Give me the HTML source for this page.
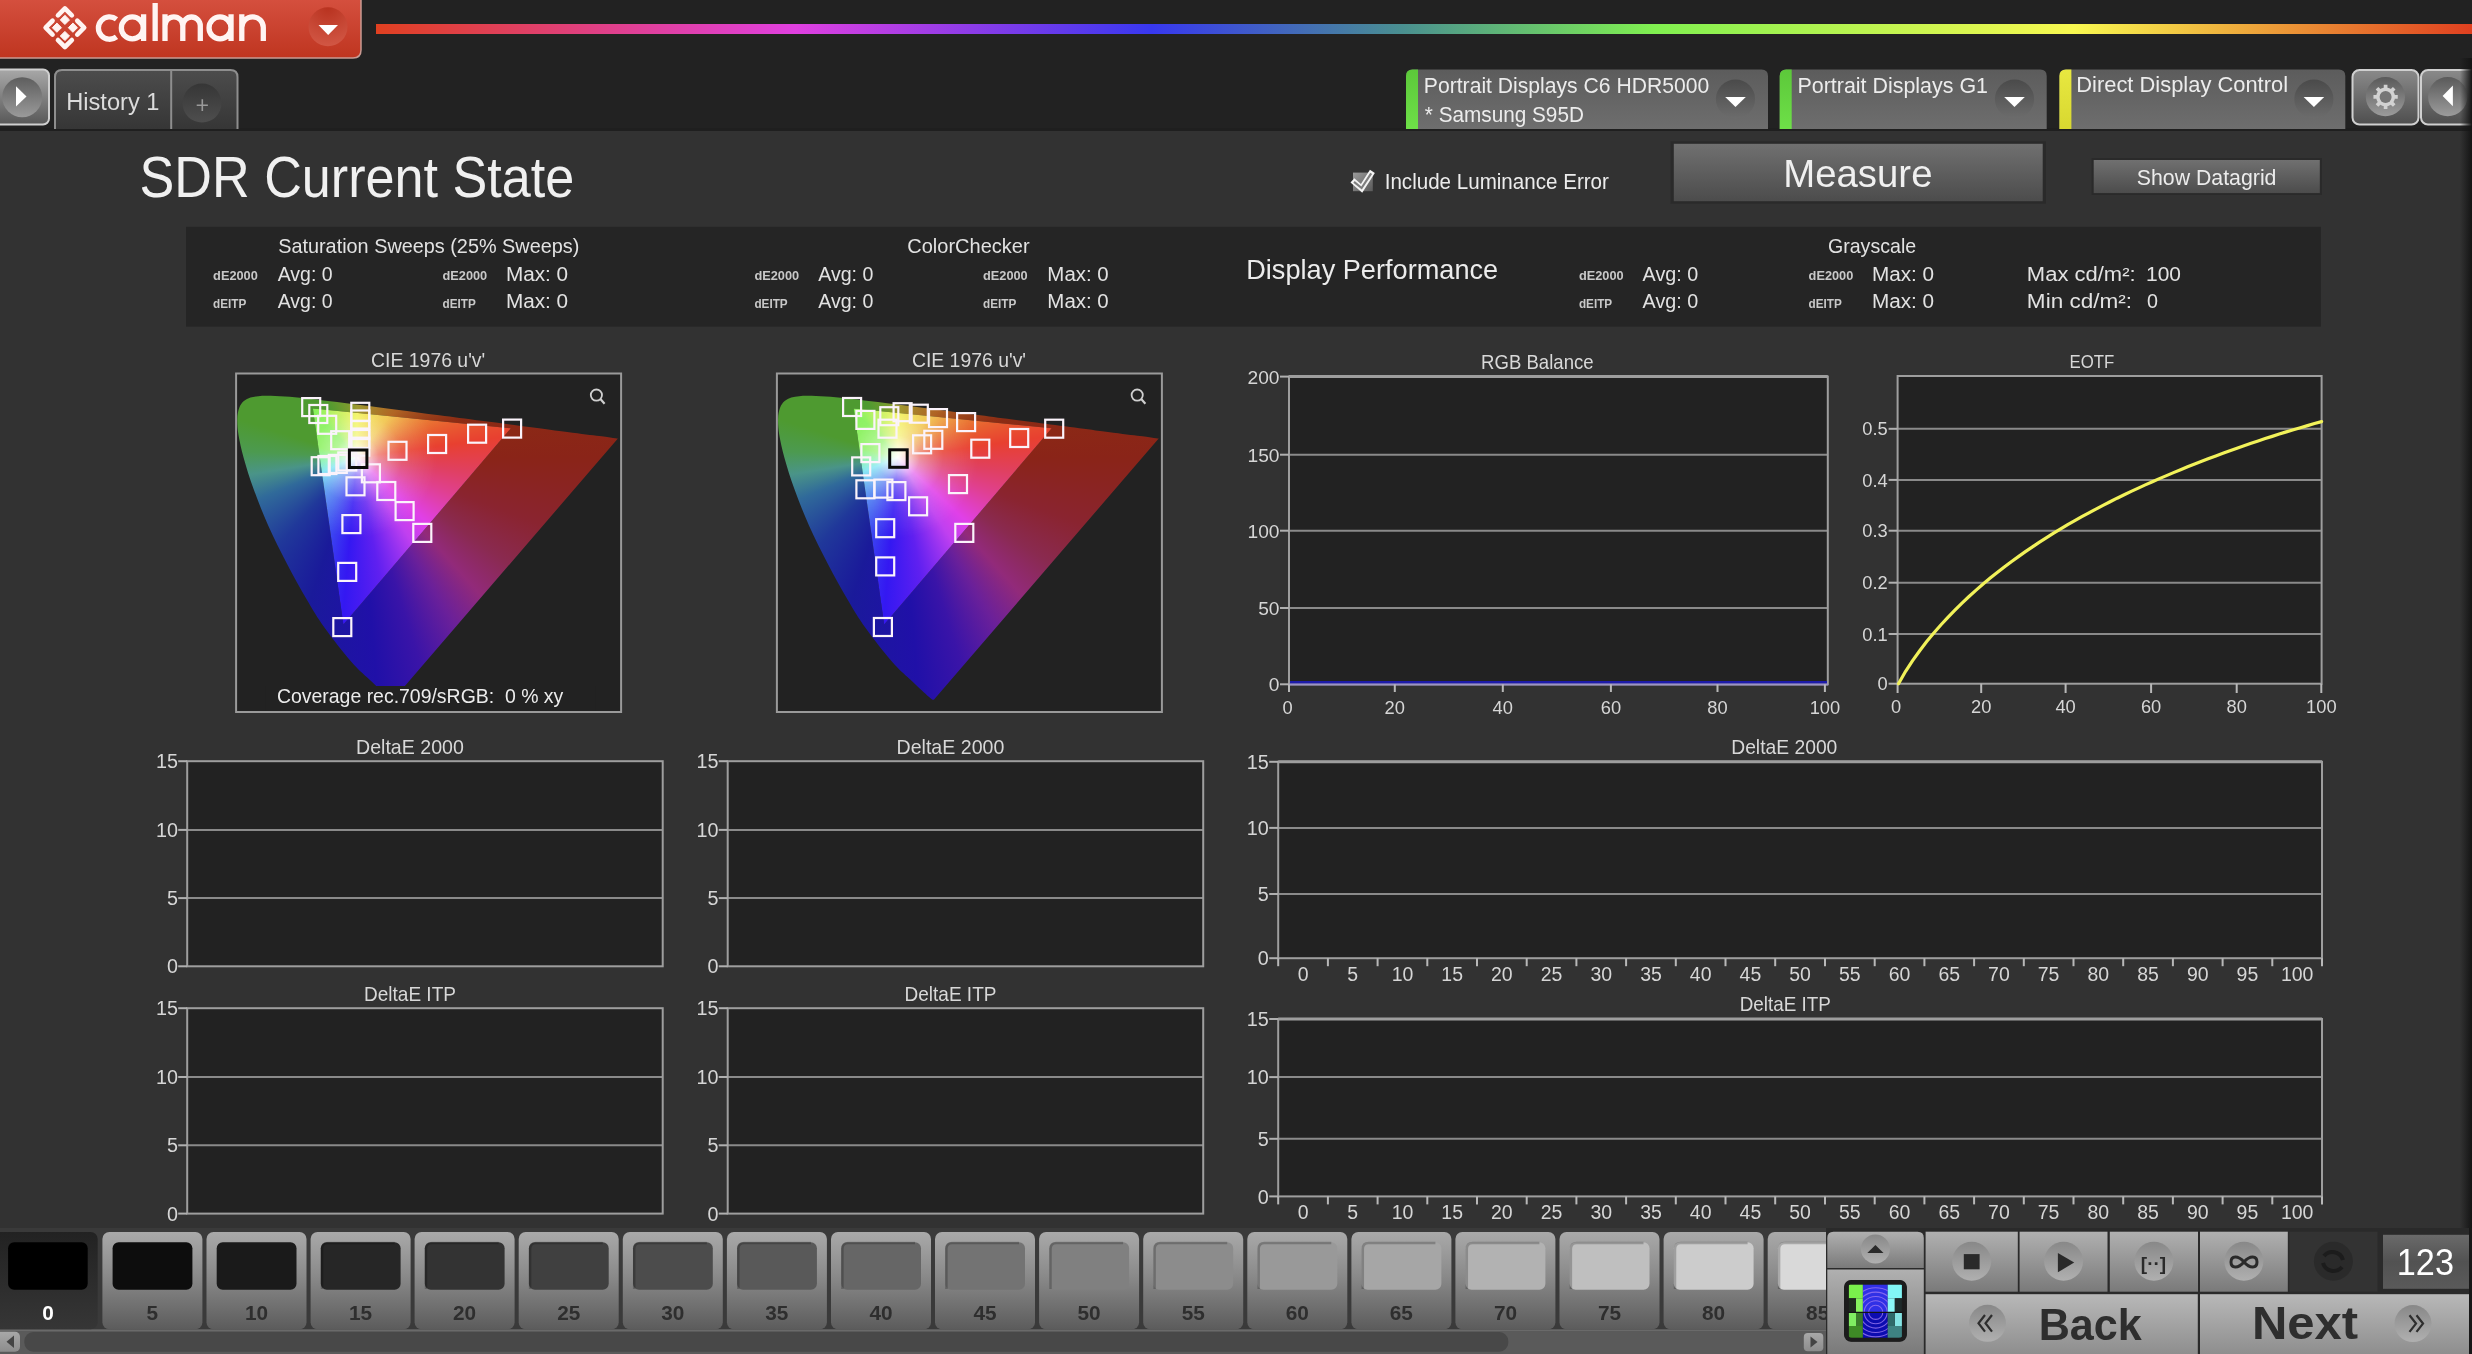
<!DOCTYPE html>
<html><head><meta charset="utf-8"><title>Calman</title>
<style>
html,body{margin:0;padding:0;background:#323232;width:2472px;height:1354px;overflow:hidden;}
body{position:relative;font-family:"Liberation Sans",sans-serif;}
svg text{font-family:"Liberation Sans",sans-serif;}
svg{will-change:transform;}
</style></head><body>
<svg width="2472" height="1354" viewBox="0 0 2472 1354" style="position:absolute;left:0;top:0"><defs><linearGradient id="logo" x1="0" y1="0" x2="0" y2="1"><stop offset="0" stop-color="#d5503f"/><stop offset="1" stop-color="#bf3520"/></linearGradient><linearGradient id="rainbow" x1="0" y1="0" x2="1" y2="0"><stop offset="0" stop-color="#e04020"/><stop offset="0.2" stop-color="#e040e0"/><stop offset="0.37" stop-color="#3838f0"/><stop offset="0.49" stop-color="#4a9090"/><stop offset="0.61" stop-color="#80f050"/><stop offset="0.81" stop-color="#f8f850"/><stop offset="1" stop-color="#e04020"/></linearGradient><radialGradient id="logocirc" cx="50%" cy="0%" r="110%"><stop offset="0" stop-color="#b8321f"/><stop offset="1" stop-color="#d45a48"/></radialGradient><linearGradient id="playbtn" x1="0" y1="0" x2="0" y2="1"><stop offset="0" stop-color="#a8a8a8"/><stop offset="0.55" stop-color="#7c7c7c"/><stop offset="1" stop-color="#585858"/></linearGradient><linearGradient id="circdk" x1="0" y1="0" x2="0" y2="1"><stop offset="0" stop-color="#5e5e5e"/><stop offset="1" stop-color="#9a9a9a"/></linearGradient><linearGradient id="tab" x1="0" y1="0" x2="0" y2="1"><stop offset="0" stop-color="#4c4c4c"/><stop offset="1" stop-color="#363636"/></linearGradient><linearGradient id="pluscirc" x1="0" y1="0" x2="0" y2="1"><stop offset="0" stop-color="#363636"/><stop offset="1" stop-color="#4e4e4e"/></linearGradient><linearGradient id="dd" x1="0" y1="0" x2="0" y2="1"><stop offset="0" stop-color="#5c5c5c"/><stop offset="1" stop-color="#6e6e6e"/></linearGradient><linearGradient id="ddcirc" x1="0" y1="0" x2="0" y2="1"><stop offset="0" stop-color="#4a4a4a"/><stop offset="1" stop-color="#6c6c6c"/></linearGradient><linearGradient id="greenstrip" x1="0" y1="0" x2="0" y2="1"><stop offset="0" stop-color="#5cc83a"/><stop offset="1" stop-color="#6ee048"/></linearGradient><linearGradient id="yelstrip" x1="0" y1="0" x2="0" y2="1"><stop offset="0" stop-color="#e8e840"/><stop offset="1" stop-color="#d8d830"/></linearGradient><linearGradient id="gearbtn" x1="0" y1="0" x2="0" y2="1"><stop offset="0" stop-color="#8a8a8a"/><stop offset="1" stop-color="#4e4e4e"/></linearGradient><linearGradient id="gearcirc" x1="0" y1="0" x2="0" y2="1"><stop offset="0" stop-color="#5a5a5a"/><stop offset="1" stop-color="#9c9c9c"/></linearGradient><linearGradient id="chk" x1="0" y1="0" x2="1" y2="1"><stop offset="0" stop-color="#9a9a9a"/><stop offset="1" stop-color="#5a5a5a"/></linearGradient><linearGradient id="meas" x1="0" y1="0" x2="0" y2="1"><stop offset="0" stop-color="#707070"/><stop offset="1" stop-color="#4c4c4c"/></linearGradient><linearGradient id="tile" x1="0" y1="0" x2="0" y2="1"><stop offset="0" stop-color="#a9a9a9"/><stop offset="0.45" stop-color="#8a8a8a"/><stop offset="1" stop-color="#5c5c5c"/></linearGradient><linearGradient id="tilesel" x1="0" y1="0" x2="0" y2="1"><stop offset="0" stop-color="#222222"/><stop offset="1" stop-color="#363636"/></linearGradient><linearGradient id="sbtn" x1="0" y1="0" x2="0" y2="1"><stop offset="0" stop-color="#a8a8a8"/><stop offset="1" stop-color="#8c8c8c"/></linearGradient><linearGradient id="ctl" x1="0" y1="0" x2="0" y2="1"><stop offset="0" stop-color="#b0b0b0"/><stop offset="1" stop-color="#7a7a7a"/></linearGradient><linearGradient id="ctl2" x1="0" y1="0" x2="0" y2="1"><stop offset="0" stop-color="#b4b4b4"/><stop offset="1" stop-color="#8c8c8c"/></linearGradient><linearGradient id="ctlcirc" x1="0" y1="0" x2="0" y2="1"><stop offset="0" stop-color="#888888"/><stop offset="1" stop-color="#b0b0b0"/></linearGradient><linearGradient id="box123" x1="0" y1="0" x2="0" y2="1"><stop offset="0" stop-color="#6a6a6a"/><stop offset="0.5" stop-color="#525252"/><stop offset="1" stop-color="#5a5a5a"/></linearGradient><linearGradient id="bn" x1="0" y1="0" x2="0" y2="1"><stop offset="0" stop-color="#b8b8b8"/><stop offset="1" stop-color="#8e8e8e"/></linearGradient><linearGradient id="redge" x1="0" y1="0" x2="1" y2="0"><stop offset="0" stop-color="rgba(20,20,20,0)"/><stop offset="0.35" stop-color="rgba(20,20,20,0.35)"/><stop offset="1" stop-color="rgba(20,20,20,1)"/></linearGradient></defs><rect x="0.0" y="0.0" width="2472.0" height="1354.0" fill="#323232"/>
<rect x="0.0" y="0.0" width="2472.0" height="130.0" fill="#222222"/>
<rect x="0.0" y="128.0" width="2472.0" height="3.0" fill="#1f1f1f"/>
<path d="M-2,-2 H361 V50 Q361,58 353,58 H-2 Z" fill="url(#logo)" stroke="#c99a92" stroke-width="1.5"/>
<rect x="376.0" y="24.0" width="2096.0" height="10.0" fill="url(#rainbow)"/>
<path d="M57.95,15.35 L64.90,8.40 L71.85,15.35" fill="none" stroke="#fff4f2" stroke-width="4.6" stroke-linecap="round" stroke-linejoin="round"/>
<path d="M77.25,20.75 L84.20,27.70 L77.25,34.65" fill="none" stroke="#fff4f2" stroke-width="4.6" stroke-linecap="round" stroke-linejoin="round"/>
<path d="M71.85,40.05 L64.90,47.00 L57.95,40.05" fill="none" stroke="#fff4f2" stroke-width="4.6" stroke-linecap="round" stroke-linejoin="round"/>
<path d="M52.55,34.65 L45.60,27.70 L52.55,20.75" fill="none" stroke="#fff4f2" stroke-width="4.6" stroke-linecap="round" stroke-linejoin="round"/>
<path d="M64.9,15.3 L69.5,19.9 L64.9,24.5 L60.3,19.9 Z" fill="#fff4f2" stroke="#fff4f2" stroke-width="1" stroke-linejoin="round"/>
<path d="M72.9,23.1 L77.5,27.7 L72.9,32.3 L68.3,27.7 Z" fill="#fff4f2" stroke="#fff4f2" stroke-width="1" stroke-linejoin="round"/>
<path d="M64.9,31.4 L69.5,36.0 L64.9,40.6 L60.3,36.0 Z" fill="#fff4f2" stroke="#fff4f2" stroke-width="1" stroke-linejoin="round"/>
<path d="M56.9,23.1 L61.5,27.7 L56.9,32.3 L52.3,27.7 Z" fill="#fff4f2" stroke="#fff4f2" stroke-width="1" stroke-linejoin="round"/>
<path d="M116.50,19.22 A11.20,11.20 0 1 0 116.50,36.88 M132.30,27.90 m-10.95,0 a10.95,10.95 0 1 0 21.9,0 a10.95,10.95 0 1 0 -21.9,0 M143.6,14.2 V40.9 M155.15,3.1 V40.9 M165,40.9 V25.75 A8.9,8.9 0 0 1 182.8,25.75 V40.9 M182.8,25.75 A8.75,8.75 0 0 1 200.3,25.75 V40.9 M165,14.2 V26 M220.00,27.90 m-10.95,0 a10.95,10.95 0 1 0 21.9,0 a10.95,10.95 0 1 0 -21.9,0 M231.05,14.2 V40.9 M241.8,40.9 V27.6 A10.75,10.75 0 0 1 263.3,27.6 V40.9 M241.8,14.2 V28" fill="none" stroke="#fff4f2" stroke-width="5.30"/>
<circle cx="328" cy="26.7" r="19.5" fill="url(#logocirc)"/>
<path d="M318.5,25 L338,25 L328.2,35 Z" fill="#ffffff"/>
<rect x="-8" y="69.5" width="57" height="55" rx="6" fill="url(#playbtn)" stroke="#d0d0d0" stroke-width="2"/>
<circle cx="22.2" cy="97.2" r="20" fill="url(#circdk)"/>
<path d="M16,86.3 L26.5,96.4 L16,106.5 Z" fill="#ffffff"/>
<path d="M55,129 V77 Q55,70 62,70 H230.5 Q237.5,70 237.5,77 V129 Z" fill="url(#tab)"/>
<path d="M55,129 V77 Q55,70 62,70 H230.5 Q237.5,70 237.5,77 V129" fill="none" stroke="#8e8e8e" stroke-width="2"/>
<rect x="170.2" y="70.0" width="2.0" height="59.0" fill="#8e8e8e"/>
<text x="66.21" y="110.1" font-size="23.98" fill="#dcdcdc" text-anchor="start" font-weight="normal" textLength="93.31" lengthAdjust="spacingAndGlyphs">History 1</text>
<circle cx="202" cy="103.1" r="19.5" fill="url(#pluscirc)"/>
<path d="M196.7,105.2 H207.9 M202.3,99.3 V111.1" stroke="#9a9a9a" stroke-width="1.6"/>
<path d="M1406.0,129 V76 Q1406.0,69.5 1412.5,69.5 H1761.5 Q1768.0,69.5 1768.0,76 V129 Z" fill="url(#dd)"/>
<path d="M1406.0,129 V76 Q1406.0,69.5 1412.5,69.5 H1418.0 V129 Z" fill="url(#greenstrip)"/>
<circle cx="1735.5" cy="99" r="19.6" fill="url(#ddcirc)"/>
<path d="M1725.2,97 H1745.8 L1735.5,107 Z" fill="#ffffff"/>
<path d="M1779.7,129 V76 Q1779.7,69.5 1786.2,69.5 H2040.2 Q2046.7,69.5 2046.7,76 V129 Z" fill="url(#dd)"/>
<path d="M1779.7,129 V76 Q1779.7,69.5 1786.2,69.5 H1791.7 V129 Z" fill="url(#greenstrip)"/>
<circle cx="2014.5" cy="99" r="19.6" fill="url(#ddcirc)"/>
<path d="M2004.2,97 H2024.8 L2014.5,107 Z" fill="#ffffff"/>
<path d="M2059.4,129 V76 Q2059.4,69.5 2065.9,69.5 H2338.8 Q2345.3,69.5 2345.3,76 V129 Z" fill="url(#dd)"/>
<path d="M2059.4,129 V76 Q2059.4,69.5 2065.9,69.5 H2071.4 V129 Z" fill="url(#yelstrip)"/>
<circle cx="2313.9" cy="99" r="19.6" fill="url(#ddcirc)"/>
<path d="M2303.6,97 H2324.2 L2313.9,107 Z" fill="#ffffff"/>
<text x="1423.86" y="93.2" font-size="22.38" fill="#ececec" text-anchor="start" font-weight="normal" textLength="285.36" lengthAdjust="spacingAndGlyphs">Portrait Displays C6 HDR5000</text>
<text x="1424.80" y="122.3" font-size="21.51" fill="#ececec" text-anchor="start" font-weight="normal" textLength="159.11" lengthAdjust="spacingAndGlyphs">* Samsung S95D</text>
<text x="1797.50" y="92.8" font-size="21.51" fill="#ececec" text-anchor="start" font-weight="normal" textLength="190.45" lengthAdjust="spacingAndGlyphs">Portrait Displays G1</text>
<text x="2076.27" y="92.4" font-size="21.22" fill="#ececec" text-anchor="start" font-weight="normal" textLength="211.77" lengthAdjust="spacingAndGlyphs">Direct Display Control</text>
<rect x="2352.5" y="70" width="66" height="54.5" rx="7" fill="url(#gearbtn)" stroke="#cfcfcf" stroke-width="2"/>
<rect x="2421" y="70" width="60" height="54.5" rx="7" fill="url(#gearbtn)" stroke="#cfcfcf" stroke-width="2"/>
<circle cx="2385.4" cy="96.7" r="19.6" fill="url(#gearcirc)"/>
<circle cx="2447.7" cy="96.7" r="19.6" fill="url(#gearcirc)"/>
<polygon points="2382.03,88.21 2382.82,87.92 2383.73,87.69 2383.76,84.74 2387.44,84.74 2387.47,87.69 2388.38,87.92 2389.22,88.23 2389.99,88.59 2390.79,89.07 2392.90,87.00 2395.50,89.60 2393.43,91.71 2393.91,92.51 2394.29,93.33 2394.58,94.12 2394.81,95.03 2397.76,95.06 2397.76,98.74 2394.81,98.77 2394.58,99.68 2394.27,100.52 2393.91,101.29 2393.43,102.09 2395.50,104.20 2392.90,106.80 2390.79,104.73 2389.99,105.21 2389.17,105.59 2388.38,105.88 2387.47,106.11 2387.44,109.06 2383.76,109.06 2383.73,106.11 2382.82,105.88 2381.98,105.57 2381.21,105.21 2380.41,104.73 2378.30,106.80 2375.70,104.20 2377.77,102.09 2377.29,101.29 2376.91,100.47 2376.62,99.68 2376.39,98.77 2373.44,98.74 2373.44,95.06 2376.39,95.03 2376.62,94.12 2376.93,93.28 2377.29,92.51 2377.77,91.71 2375.70,89.60 2378.30,87.00 2380.41,89.07 2381.21,88.59" fill="#d2d2d2"/>
<circle cx="2385.6" cy="96.9" r="6" fill="#767676"/>
<path d="M2452.9,85.6 L2442.6,96 L2452.9,106.2 Z" fill="#ffffff"/>
<text x="139.56" y="197.0" font-size="56.69" fill="#f0f0f0" text-anchor="start" font-weight="normal" textLength="434.76" lengthAdjust="spacingAndGlyphs">SDR Current State</text>
<rect x="1353.0" y="172.6" width="19.8" height="18.6" fill="url(#chk)"/>
<path d="M1352.4,180.4 L1361.6,188.4 L1372.4,171.4" fill="none" stroke="#f4f4f4" stroke-width="5.8" stroke-linejoin="miter"/>
<path d="M1354.0,181.8 L1361.6,188.0 L1371.2,173.4" fill="none" stroke="#7e7e7e" stroke-width="2.2" stroke-linejoin="miter"/>
<text x="1384.70" y="189.2" font-size="21.66" fill="#ececec" text-anchor="start" font-weight="normal" textLength="224.20" lengthAdjust="spacingAndGlyphs">Include Luminance Error</text>
<rect x="1670.5" y="141.3" width="375.5" height="62.3" fill="#2a2a2a"/>
<rect x="1673.8" y="143.8" width="368.9" height="57.4" fill="url(#meas)"/>
<text x="1783.22" y="186.6" font-size="38.66" fill="#f0f0f0" text-anchor="start" font-weight="normal" textLength="149.26" lengthAdjust="spacingAndGlyphs">Measure</text>
<rect x="2091.5" y="158.0" width="230.5" height="37.0" fill="#2a2a2a"/>
<rect x="2093.7" y="160.0" width="226.1" height="33.1" fill="url(#meas)"/>
<text x="2136.80" y="184.7" font-size="21.37" fill="#ececec" text-anchor="start" font-weight="normal" textLength="139.68" lengthAdjust="spacingAndGlyphs">Show Datagrid</text>
<rect x="186.0" y="226.8" width="2134.8" height="99.9" fill="#252525"/>
<text x="278.20" y="253.1" font-size="20.93" fill="#e2e2e2" text-anchor="start" font-weight="normal" textLength="301.12" lengthAdjust="spacingAndGlyphs">Saturation Sweeps (25% Sweeps)</text>
<text x="213.10" y="280.3" font-size="13.66" fill="#c8c8c8" text-anchor="start" font-weight="bold" textLength="44.72" lengthAdjust="spacingAndGlyphs">dE2000</text>
<text x="213.10" y="307.5" font-size="13.66" fill="#c8c8c8" text-anchor="start" font-weight="bold" textLength="33.29" lengthAdjust="spacingAndGlyphs">dEITP</text>
<text x="277.70" y="281.2" font-size="19.77" fill="#e2e2e2" text-anchor="start" font-weight="normal" textLength="54.88" lengthAdjust="spacingAndGlyphs">Avg: 0</text>
<text x="277.70" y="308.3" font-size="19.77" fill="#e2e2e2" text-anchor="start" font-weight="normal" textLength="54.88" lengthAdjust="spacingAndGlyphs">Avg: 0</text>
<text x="442.50" y="280.3" font-size="13.66" fill="#c8c8c8" text-anchor="start" font-weight="bold" textLength="44.72" lengthAdjust="spacingAndGlyphs">dE2000</text>
<text x="442.50" y="307.5" font-size="13.66" fill="#c8c8c8" text-anchor="start" font-weight="bold" textLength="33.29" lengthAdjust="spacingAndGlyphs">dEITP</text>
<text x="505.95" y="281.2" font-size="19.77" fill="#e2e2e2" text-anchor="start" font-weight="normal" textLength="62.23" lengthAdjust="spacingAndGlyphs">Max: 0</text>
<text x="505.95" y="308.3" font-size="19.77" fill="#e2e2e2" text-anchor="start" font-weight="normal" textLength="62.23" lengthAdjust="spacingAndGlyphs">Max: 0</text>
<text x="907.24" y="253.0" font-size="20.93" fill="#e2e2e2" text-anchor="start" font-weight="normal" textLength="122.43" lengthAdjust="spacingAndGlyphs">ColorChecker</text>
<text x="754.40" y="280.3" font-size="13.66" fill="#c8c8c8" text-anchor="start" font-weight="bold" textLength="44.72" lengthAdjust="spacingAndGlyphs">dE2000</text>
<text x="754.40" y="307.5" font-size="13.66" fill="#c8c8c8" text-anchor="start" font-weight="bold" textLength="33.29" lengthAdjust="spacingAndGlyphs">dEITP</text>
<text x="818.20" y="281.2" font-size="19.77" fill="#e2e2e2" text-anchor="start" font-weight="normal" textLength="55.18" lengthAdjust="spacingAndGlyphs">Avg: 0</text>
<text x="818.20" y="308.3" font-size="19.77" fill="#e2e2e2" text-anchor="start" font-weight="normal" textLength="55.18" lengthAdjust="spacingAndGlyphs">Avg: 0</text>
<text x="983.00" y="280.3" font-size="13.66" fill="#c8c8c8" text-anchor="start" font-weight="bold" textLength="44.72" lengthAdjust="spacingAndGlyphs">dE2000</text>
<text x="983.00" y="307.5" font-size="13.66" fill="#c8c8c8" text-anchor="start" font-weight="bold" textLength="33.29" lengthAdjust="spacingAndGlyphs">dEITP</text>
<text x="1047.37" y="281.2" font-size="19.77" fill="#e2e2e2" text-anchor="start" font-weight="normal" textLength="61.32" lengthAdjust="spacingAndGlyphs">Max: 0</text>
<text x="1047.37" y="308.3" font-size="19.77" fill="#e2e2e2" text-anchor="start" font-weight="normal" textLength="61.32" lengthAdjust="spacingAndGlyphs">Max: 0</text>
<text x="1246.21" y="279.2" font-size="27.33" fill="#ececec" text-anchor="start" font-weight="normal" textLength="251.97" lengthAdjust="spacingAndGlyphs">Display Performance</text>
<text x="1578.90" y="280.3" font-size="13.66" fill="#c8c8c8" text-anchor="start" font-weight="bold" textLength="44.72" lengthAdjust="spacingAndGlyphs">dE2000</text>
<text x="1578.90" y="307.5" font-size="13.66" fill="#c8c8c8" text-anchor="start" font-weight="bold" textLength="33.29" lengthAdjust="spacingAndGlyphs">dEITP</text>
<text x="1642.60" y="281.2" font-size="19.77" fill="#e2e2e2" text-anchor="start" font-weight="normal" textLength="55.58" lengthAdjust="spacingAndGlyphs">Avg: 0</text>
<text x="1642.60" y="308.3" font-size="19.77" fill="#e2e2e2" text-anchor="start" font-weight="normal" textLength="55.58" lengthAdjust="spacingAndGlyphs">Avg: 0</text>
<text x="1808.60" y="280.3" font-size="13.66" fill="#c8c8c8" text-anchor="start" font-weight="bold" textLength="44.72" lengthAdjust="spacingAndGlyphs">dE2000</text>
<text x="1808.60" y="307.5" font-size="13.66" fill="#c8c8c8" text-anchor="start" font-weight="bold" textLength="33.29" lengthAdjust="spacingAndGlyphs">dEITP</text>
<text x="1871.95" y="281.2" font-size="19.77" fill="#e2e2e2" text-anchor="start" font-weight="normal" textLength="62.23" lengthAdjust="spacingAndGlyphs">Max: 0</text>
<text x="1871.95" y="308.3" font-size="19.77" fill="#e2e2e2" text-anchor="start" font-weight="normal" textLength="62.23" lengthAdjust="spacingAndGlyphs">Max: 0</text>
<text x="1827.96" y="253.4" font-size="20.93" fill="#e2e2e2" text-anchor="start" font-weight="normal" textLength="88.23" lengthAdjust="spacingAndGlyphs">Grayscale</text>
<text x="2026.89" y="281.2" font-size="19.77" fill="#e2e2e2" text-anchor="start" font-weight="normal" textLength="108.77" lengthAdjust="spacingAndGlyphs">Max cd/m²:</text>
<text x="2146.04" y="281.2" font-size="19.77" fill="#e2e2e2" text-anchor="start" font-weight="normal" textLength="34.94" lengthAdjust="spacingAndGlyphs">100</text>
<text x="2026.86" y="308.3" font-size="19.77" fill="#e2e2e2" text-anchor="start" font-weight="normal" textLength="105.14" lengthAdjust="spacingAndGlyphs">Min cd/m²:</text>
<text x="2147.00" y="308.3" font-size="19.77" fill="#e2e2e2" text-anchor="start" font-weight="normal" textLength="10.98" lengthAdjust="spacingAndGlyphs">0</text>
<rect x="236.1" y="373.5" width="385.0" height="338.5" fill="#222222" stroke="#9a9a9a" stroke-width="2"/>
<foreignObject x="235.1" y="372.5" width="387.0" height="340.5"><div style="position:relative;width:387.0px;height:340.5px"><div style="position:absolute;left:0;top:0;width:100%;height:100%;background:conic-gradient(from 0deg at 121.9px 84.5px, #a09a30 0deg, #b06424 40deg, #8c2c14 70deg, #8a2418 90deg, #8a2430 110deg, #8a2a50 125deg, #922a7a 138deg, #6a209a 150deg, #3a14a8 163deg, #2010a8 175deg, #1a1a9a 198deg, #20389a 222deg, #306a9a 247deg, #4a9488 261deg, #4c9a50 273deg, #4e9a30 288deg, #4e9a30 330deg, #7a9a2e 350deg, #a09a30 360deg);clip-path:path(evenodd, 'M158.4,326.7 C158.3,326.7 158.2,327.0 157.8,327.0 C157.3,327.0 157.8,328.2 155.6,326.5 C153.5,324.8 148.6,320.2 144.9,316.9 C141.2,313.5 138.3,310.9 133.5,306.3 C128.7,301.6 123.5,297.7 116.2,289.2 C108.8,280.6 96.9,265.6 89.5,255.2 C82.0,244.8 77.7,237.4 71.5,226.8 C65.2,216.1 58.4,203.7 52.0,191.4 C45.6,179.2 38.8,165.7 33.2,153.2 C27.6,140.7 22.6,127.8 18.5,116.5 C14.4,105.2 11.1,94.5 8.6,85.5 C6.1,76.6 4.5,69.0 3.4,62.5 C2.4,56.0 2.1,51.0 2.2,46.5 C2.3,42.0 3.0,38.5 4.1,35.5 C5.2,32.5 6.9,30.3 8.8,28.6 C10.7,26.8 13.0,25.8 15.4,25.0 C17.9,24.2 20.6,23.9 23.3,23.7 C26.1,23.4 27.5,23.3 31.9,23.3 C36.3,23.4 43.4,23.5 49.8,24.0 C56.2,24.4 62.7,25.0 70.3,25.8 C77.8,26.6 85.8,27.6 95.0,28.8 C104.2,29.9 114.1,31.2 125.3,32.6 C136.4,34.0 148.7,35.6 161.8,37.3 C175.0,39.1 189.8,41.0 204.2,42.8 C218.6,44.7 228.9,46.1 248.2,48.6 C267.4,51.1 301.3,55.5 319.6,57.9 C338.0,60.2 348.8,61.6 358.1,62.8 C367.3,64.0 371.0,64.5 375.1,65.0 C379.2,65.6 381.5,65.9 382.8,66.0 Z M77.8,36.0 L275.8,55.8 L108.3,252.0 Z')"></div><div style="position:absolute;left:0;top:0;width:100%;height:100%;background:radial-gradient(circle at 121.9px 84.5px, rgba(255,255,255,1) 0px, rgba(255,255,255,0.85) 7px, rgba(255,255,255,0.42) 22px, rgba(255,255,255,0.14) 45px, rgba(255,255,255,0) 80px),conic-gradient(from 0deg at 121.9px 84.5px, #f2f250 0deg, #f0c040 38deg, #e86030 70deg, #e84030 82deg, #e04060 97deg, #e04090 111deg, #e040e8 133deg, #c040f0 147deg, #6020f0 169deg, #3418f2 185deg, #4060f0 206deg, #50a0f0 228deg, #60e0f0 248deg, #70f0a0 265deg, #80f050 285deg, #80f050 318deg, #b0f050 331deg, #f2f250 360deg);clip-path:path('M77.8,36.0 L275.8,55.8 L108.3,252.0 Z')"></div></div></foreignObject>
<rect x="302.2" y="398.1" width="18" height="18" fill="none" stroke="#fbf3fb" stroke-width="2.2"/>
<rect x="309.3" y="405.0" width="18" height="18" fill="none" stroke="#fbf3fb" stroke-width="2.2"/>
<rect x="318.2" y="415.8" width="18" height="18" fill="none" stroke="#fbf3fb" stroke-width="2.2"/>
<rect x="331.2" y="431.2" width="18" height="18" fill="none" stroke="#fbf3fb" stroke-width="2.2"/>
<rect x="351.3" y="402.8" width="18" height="18" fill="none" stroke="#fbf3fb" stroke-width="2.2"/>
<rect x="351.3" y="410.5" width="18" height="18" fill="none" stroke="#fbf3fb" stroke-width="2.2"/>
<rect x="351.3" y="421.1" width="18" height="18" fill="none" stroke="#fbf3fb" stroke-width="2.2"/>
<rect x="351.3" y="430.0" width="18" height="18" fill="none" stroke="#fbf3fb" stroke-width="2.2"/>
<rect x="351.3" y="437.7" width="18" height="18" fill="none" stroke="#fbf3fb" stroke-width="2.2"/>
<rect x="311.7" y="457.2" width="18" height="18" fill="none" stroke="#fbf3fb" stroke-width="2.2"/>
<rect x="318.4" y="456.0" width="18" height="18" fill="none" stroke="#fbf3fb" stroke-width="2.2"/>
<rect x="328.8" y="454.9" width="18" height="18" fill="none" stroke="#fbf3fb" stroke-width="2.2"/>
<rect x="338.3" y="452.5" width="18" height="18" fill="none" stroke="#fbf3fb" stroke-width="2.2"/>
<rect x="361.9" y="464.3" width="18" height="18" fill="none" stroke="#fbf3fb" stroke-width="2.2"/>
<rect x="346.5" y="477.3" width="18" height="18" fill="none" stroke="#fbf3fb" stroke-width="2.2"/>
<rect x="377.3" y="482.0" width="18" height="18" fill="none" stroke="#fbf3fb" stroke-width="2.2"/>
<rect x="395.6" y="502.1" width="18" height="18" fill="none" stroke="#fbf3fb" stroke-width="2.2"/>
<rect x="413.3" y="523.9" width="18" height="18" fill="none" stroke="#fbf3fb" stroke-width="2.2"/>
<rect x="342.4" y="515.1" width="18" height="18" fill="none" stroke="#fbf3fb" stroke-width="2.2"/>
<rect x="388.5" y="441.8" width="18" height="18" fill="none" stroke="#fbf3fb" stroke-width="2.2"/>
<rect x="428.1" y="435.0" width="18" height="18" fill="none" stroke="#fbf3fb" stroke-width="2.2"/>
<rect x="468.1" y="424.7" width="18" height="18" fill="none" stroke="#fbf3fb" stroke-width="2.2"/>
<rect x="503.1" y="419.6" width="18" height="18" fill="none" stroke="#fbf3fb" stroke-width="2.2"/>
<rect x="338.2" y="562.9" width="18" height="18" fill="none" stroke="#fbf3fb" stroke-width="2.2"/>
<rect x="333.3" y="618.1" width="18" height="18" fill="none" stroke="#fbf3fb" stroke-width="2.2"/>
<rect x="349.4" y="450.0" width="17.5" height="17.5" fill="none" stroke="#0a0a0a" stroke-width="3"/>
<circle cx="596.4" cy="395.1" r="5.6" fill="none" stroke="#cfcfcf" stroke-width="1.8"/><path d="M600.4,399.1 L604.6,403.7" stroke="#cfcfcf" stroke-width="2.2"/>
<text x="371.12" y="366.5" font-size="19.77" fill="#d8d8d8" text-anchor="start" font-weight="normal" textLength="114.14" lengthAdjust="spacingAndGlyphs">CIE 1976 u'v'</text>
<rect x="265.1" y="686.0" width="330.0" height="25.0" fill="#222222"/>
<text x="276.95" y="702.7" font-size="20.49" fill="#ececec" text-anchor="start" font-weight="normal" textLength="286.33" lengthAdjust="spacingAndGlyphs">Coverage rec.709/sRGB:  0 % xy</text>
<rect x="776.9" y="373.5" width="385.0" height="338.5" fill="#222222" stroke="#9a9a9a" stroke-width="2"/>
<foreignObject x="775.9" y="372.5" width="387.0" height="340.5"><div style="position:relative;width:387.0px;height:340.5px"><div style="position:absolute;left:0;top:0;width:100%;height:100%;background:conic-gradient(from 0deg at 121.9px 84.5px, #a09a30 0deg, #b06424 40deg, #8c2c14 70deg, #8a2418 90deg, #8a2430 110deg, #8a2a50 125deg, #922a7a 138deg, #6a209a 150deg, #3a14a8 163deg, #2010a8 175deg, #1a1a9a 198deg, #20389a 222deg, #306a9a 247deg, #4a9488 261deg, #4c9a50 273deg, #4e9a30 288deg, #4e9a30 330deg, #7a9a2e 350deg, #a09a30 360deg);clip-path:path(evenodd, 'M158.4,326.7 C158.3,326.7 158.2,327.0 157.8,327.0 C157.3,327.0 157.8,328.2 155.6,326.5 C153.5,324.8 148.6,320.2 144.9,316.9 C141.2,313.5 138.3,310.9 133.5,306.3 C128.7,301.6 123.5,297.7 116.2,289.2 C108.8,280.6 96.9,265.6 89.5,255.2 C82.0,244.8 77.7,237.4 71.5,226.8 C65.2,216.1 58.4,203.7 52.0,191.4 C45.6,179.2 38.8,165.7 33.2,153.2 C27.6,140.7 22.6,127.8 18.5,116.5 C14.4,105.2 11.1,94.5 8.6,85.5 C6.1,76.6 4.5,69.0 3.4,62.5 C2.4,56.0 2.1,51.0 2.2,46.5 C2.3,42.0 3.0,38.5 4.1,35.5 C5.2,32.5 6.9,30.3 8.8,28.6 C10.7,26.8 13.0,25.8 15.4,25.0 C17.9,24.2 20.6,23.9 23.3,23.7 C26.1,23.4 27.5,23.3 31.9,23.3 C36.3,23.4 43.4,23.5 49.8,24.0 C56.2,24.4 62.7,25.0 70.3,25.8 C77.8,26.6 85.8,27.6 95.0,28.8 C104.2,29.9 114.1,31.2 125.3,32.6 C136.4,34.0 148.7,35.6 161.8,37.3 C175.0,39.1 189.8,41.0 204.2,42.8 C218.6,44.7 228.9,46.1 248.2,48.6 C267.4,51.1 301.3,55.5 319.6,57.9 C338.0,60.2 348.8,61.6 358.1,62.8 C367.3,64.0 371.0,64.5 375.1,65.0 C379.2,65.6 381.5,65.9 382.8,66.0 Z M77.8,36.0 L275.8,55.8 L108.3,252.0 Z')"></div><div style="position:absolute;left:0;top:0;width:100%;height:100%;background:radial-gradient(circle at 121.9px 84.5px, rgba(255,255,255,1) 0px, rgba(255,255,255,0.85) 7px, rgba(255,255,255,0.42) 22px, rgba(255,255,255,0.14) 45px, rgba(255,255,255,0) 80px),conic-gradient(from 0deg at 121.9px 84.5px, #f2f250 0deg, #f0c040 38deg, #e86030 70deg, #e84030 82deg, #e04060 97deg, #e04090 111deg, #e040e8 133deg, #c040f0 147deg, #6020f0 169deg, #3418f2 185deg, #4060f0 206deg, #50a0f0 228deg, #60e0f0 248deg, #70f0a0 265deg, #80f050 285deg, #80f050 318deg, #b0f050 331deg, #f2f250 360deg);clip-path:path('M77.8,36.0 L275.8,55.8 L108.3,252.0 Z')"></div></div></foreignObject>
<rect x="843.1" y="398.0" width="18" height="18" fill="none" stroke="#fbf3fb" stroke-width="2.2"/>
<rect x="856.4" y="410.9" width="18" height="18" fill="none" stroke="#fbf3fb" stroke-width="2.2"/>
<rect x="880.3" y="407.2" width="18" height="18" fill="none" stroke="#fbf3fb" stroke-width="2.2"/>
<rect x="893.6" y="403.2" width="18" height="18" fill="none" stroke="#fbf3fb" stroke-width="2.2"/>
<rect x="909.8" y="404.7" width="18" height="18" fill="none" stroke="#fbf3fb" stroke-width="2.2"/>
<rect x="929.0" y="409.1" width="18" height="18" fill="none" stroke="#fbf3fb" stroke-width="2.2"/>
<rect x="957.1" y="413.1" width="18" height="18" fill="none" stroke="#fbf3fb" stroke-width="2.2"/>
<rect x="878.5" y="419.7" width="18" height="18" fill="none" stroke="#fbf3fb" stroke-width="2.2"/>
<rect x="913.1" y="435.3" width="18" height="18" fill="none" stroke="#fbf3fb" stroke-width="2.2"/>
<rect x="924.3" y="430.8" width="18" height="18" fill="none" stroke="#fbf3fb" stroke-width="2.2"/>
<rect x="861.4" y="444.1" width="18" height="18" fill="none" stroke="#fbf3fb" stroke-width="2.2"/>
<rect x="852.2" y="457.4" width="18" height="18" fill="none" stroke="#fbf3fb" stroke-width="2.2"/>
<rect x="856.4" y="480.3" width="18" height="18" fill="none" stroke="#fbf3fb" stroke-width="2.2"/>
<rect x="874.4" y="479.6" width="18" height="18" fill="none" stroke="#fbf3fb" stroke-width="2.2"/>
<rect x="887.4" y="482.1" width="18" height="18" fill="none" stroke="#fbf3fb" stroke-width="2.2"/>
<rect x="909.1" y="497.3" width="18" height="18" fill="none" stroke="#fbf3fb" stroke-width="2.2"/>
<rect x="949.0" y="475.1" width="18" height="18" fill="none" stroke="#fbf3fb" stroke-width="2.2"/>
<rect x="876.2" y="519.2" width="18" height="18" fill="none" stroke="#fbf3fb" stroke-width="2.2"/>
<rect x="876.2" y="557.4" width="18" height="18" fill="none" stroke="#fbf3fb" stroke-width="2.2"/>
<rect x="955.3" y="523.9" width="18" height="18" fill="none" stroke="#fbf3fb" stroke-width="2.2"/>
<rect x="971.3" y="439.7" width="18" height="18" fill="none" stroke="#fbf3fb" stroke-width="2.2"/>
<rect x="1010.2" y="429.0" width="18" height="18" fill="none" stroke="#fbf3fb" stroke-width="2.2"/>
<rect x="1045.2" y="419.7" width="18" height="18" fill="none" stroke="#fbf3fb" stroke-width="2.2"/>
<rect x="873.9" y="618.0" width="18" height="18" fill="none" stroke="#fbf3fb" stroke-width="2.2"/>
<rect x="889.7" y="449.8" width="17.5" height="17.5" fill="none" stroke="#0a0a0a" stroke-width="3"/>
<circle cx="1137.2" cy="395.1" r="5.6" fill="none" stroke="#cfcfcf" stroke-width="1.8"/><path d="M1141.2,399.1 L1145.4,403.7" stroke="#cfcfcf" stroke-width="2.2"/>
<text x="911.92" y="366.5" font-size="19.77" fill="#d8d8d8" text-anchor="start" font-weight="normal" textLength="114.14" lengthAdjust="spacingAndGlyphs">CIE 1976 u'v'</text>
<rect x="1289.0" y="376.6" width="538.8" height="307.7" fill="#222222"/>
<path d="M1289.0,454.7 H1827.8" stroke="#8a8a8a" stroke-width="2"/>
<path d="M1289.0,530.7 H1827.8" stroke="#8a8a8a" stroke-width="2"/>
<path d="M1289.0,608.0 H1827.8" stroke="#8a8a8a" stroke-width="2"/>
<rect x="1289.0" y="376.6" width="538.8" height="307.7" fill="none" stroke="#9e9e9e" stroke-width="2"/>
<path d="M1289.0,376.6 H1827.8" stroke="#9e9e9e" stroke-width="3"/>
<path d="M1280.0,376.6 H1289.0" stroke="#b0b0b0" stroke-width="2"/>
<text x="1279.50" y="383.5" font-size="19.19" fill="#d6d6d6" text-anchor="end" font-weight="normal">200</text>
<path d="M1280.0,454.7 H1289.0" stroke="#b0b0b0" stroke-width="2"/>
<text x="1279.50" y="461.6" font-size="19.19" fill="#d6d6d6" text-anchor="end" font-weight="normal">150</text>
<path d="M1280.0,530.7 H1289.0" stroke="#b0b0b0" stroke-width="2"/>
<text x="1279.50" y="537.6" font-size="19.19" fill="#d6d6d6" text-anchor="end" font-weight="normal">100</text>
<path d="M1280.0,608.0 H1289.0" stroke="#b0b0b0" stroke-width="2"/>
<text x="1279.50" y="614.9" font-size="19.19" fill="#d6d6d6" text-anchor="end" font-weight="normal">50</text>
<path d="M1280.0,684.3 H1289.0" stroke="#b0b0b0" stroke-width="2"/>
<text x="1279.50" y="691.2" font-size="19.19" fill="#d6d6d6" text-anchor="end" font-weight="normal">0</text>
<path d="M1290,682.4 H1827" stroke="#1c1aa8" stroke-width="2.6"/>
<path d="M1289,684.6 H1828" stroke="#9c94c4" stroke-width="2"/>
<path d="M1289.0,684.3 V692" stroke="#b8b8b8" stroke-width="2"/>
<text x="1287.60" y="713.7" font-size="18.31" fill="#d6d6d6" text-anchor="middle" font-weight="normal">0</text>
<path d="M1394.8,684.3 V692" stroke="#b8b8b8" stroke-width="2"/>
<text x="1394.80" y="713.7" font-size="18.31" fill="#d6d6d6" text-anchor="middle" font-weight="normal">20</text>
<path d="M1502.8,684.3 V692" stroke="#b8b8b8" stroke-width="2"/>
<text x="1502.80" y="713.7" font-size="18.31" fill="#d6d6d6" text-anchor="middle" font-weight="normal">40</text>
<path d="M1610.9,684.3 V692" stroke="#b8b8b8" stroke-width="2"/>
<text x="1610.90" y="713.7" font-size="18.31" fill="#d6d6d6" text-anchor="middle" font-weight="normal">60</text>
<path d="M1717.5,684.3 V692" stroke="#b8b8b8" stroke-width="2"/>
<text x="1717.50" y="713.7" font-size="18.31" fill="#d6d6d6" text-anchor="middle" font-weight="normal">80</text>
<path d="M1824.9,684.3 V692" stroke="#b8b8b8" stroke-width="2"/>
<text x="1824.90" y="713.7" font-size="18.31" fill="#d6d6d6" text-anchor="middle" font-weight="normal">100</text>
<text x="1481.11" y="368.8" font-size="20.93" fill="#d8d8d8" text-anchor="start" font-weight="normal" textLength="112.45" lengthAdjust="spacingAndGlyphs">RGB Balance</text>
<rect x="1897.6" y="376.0" width="424.0" height="307.7" fill="#222222"/>
<path d="M1897.6,428.8 H2321.6" stroke="#8a8a8a" stroke-width="2"/>
<path d="M1897.6,479.9 H2321.6" stroke="#8a8a8a" stroke-width="2"/>
<path d="M1897.6,530.7 H2321.6" stroke="#8a8a8a" stroke-width="2"/>
<path d="M1897.6,582.7 H2321.6" stroke="#8a8a8a" stroke-width="2"/>
<path d="M1897.6,634.0 H2321.6" stroke="#8a8a8a" stroke-width="2"/>
<rect x="1897.6" y="376.0" width="424.0" height="307.7" fill="none" stroke="#9e9e9e" stroke-width="2"/>
<path d="M1888.6,428.8 H1897.6" stroke="#b0b0b0" stroke-width="2"/>
<text x="1887.80" y="435.4" font-size="18.31" fill="#d6d6d6" text-anchor="end" font-weight="normal">0.5</text>
<path d="M1888.6,479.9 H1897.6" stroke="#b0b0b0" stroke-width="2"/>
<text x="1887.80" y="486.5" font-size="18.31" fill="#d6d6d6" text-anchor="end" font-weight="normal">0.4</text>
<path d="M1888.6,530.7 H1897.6" stroke="#b0b0b0" stroke-width="2"/>
<text x="1887.80" y="537.3" font-size="18.31" fill="#d6d6d6" text-anchor="end" font-weight="normal">0.3</text>
<path d="M1888.6,582.7 H1897.6" stroke="#b0b0b0" stroke-width="2"/>
<text x="1887.80" y="589.3" font-size="18.31" fill="#d6d6d6" text-anchor="end" font-weight="normal">0.2</text>
<path d="M1888.6,634.0 H1897.6" stroke="#b0b0b0" stroke-width="2"/>
<text x="1887.80" y="640.6" font-size="18.31" fill="#d6d6d6" text-anchor="end" font-weight="normal">0.1</text>
<path d="M1888.6,683.7 H1897.6" stroke="#b0b0b0" stroke-width="2"/>
<text x="1887.80" y="690.3" font-size="18.31" fill="#d6d6d6" text-anchor="end" font-weight="normal">0</text>
<path d="M1897.6,683.7 V693" stroke="#b8b8b8" stroke-width="2"/>
<text x="1896.10" y="713.2" font-size="18.31" fill="#d6d6d6" text-anchor="middle" font-weight="normal">0</text>
<path d="M1981.2,683.7 V693" stroke="#b8b8b8" stroke-width="2"/>
<text x="1981.20" y="713.2" font-size="18.31" fill="#d6d6d6" text-anchor="middle" font-weight="normal">20</text>
<path d="M2065.6,683.7 V693" stroke="#b8b8b8" stroke-width="2"/>
<text x="2065.60" y="713.2" font-size="18.31" fill="#d6d6d6" text-anchor="middle" font-weight="normal">40</text>
<path d="M2151.1,683.7 V693" stroke="#b8b8b8" stroke-width="2"/>
<text x="2151.10" y="713.2" font-size="18.31" fill="#d6d6d6" text-anchor="middle" font-weight="normal">60</text>
<path d="M2236.7,683.7 V693" stroke="#b8b8b8" stroke-width="2"/>
<text x="2236.70" y="713.2" font-size="18.31" fill="#d6d6d6" text-anchor="middle" font-weight="normal">80</text>
<path d="M2321.3,683.7 V693" stroke="#b8b8b8" stroke-width="2"/>
<text x="2321.30" y="713.2" font-size="18.31" fill="#d6d6d6" text-anchor="middle" font-weight="normal">100</text>
<text x="2069.52" y="368.2" font-size="19.19" fill="#d8d8d8" text-anchor="start" font-weight="normal" textLength="44.80" lengthAdjust="spacingAndGlyphs">EOTF</text>
<path d="M1898.5,683.7 L1905.6,671.3 L1912.6,660.6 L1919.7,650.7 L1926.7,641.6 L1933.8,633.0 L1940.8,625.0 L1947.9,617.3 L1954.9,610.1 L1962.0,603.1 L1969.0,596.5 L1976.1,590.1 L1983.1,584.0 L1990.2,578.1 L1997.2,572.5 L2004.3,567.0 L2011.3,561.7 L2018.4,556.6 L2025.4,551.6 L2032.5,546.8 L2039.5,542.1 L2046.6,537.6 L2053.6,533.2 L2060.7,528.9 L2067.7,524.7 L2074.8,520.7 L2081.8,516.7 L2088.9,512.8 L2095.9,509.1 L2103.0,505.4 L2110.1,501.8 L2117.1,498.2 L2124.2,494.8 L2131.2,491.4 L2138.3,488.1 L2145.3,484.9 L2152.4,481.7 L2159.4,478.6 L2166.5,475.6 L2173.5,472.6 L2180.6,469.7 L2187.6,466.8 L2194.7,464.0 L2201.7,461.3 L2208.8,458.5 L2215.8,455.9 L2222.9,453.3 L2229.9,450.7 L2237.0,448.2 L2244.0,445.8 L2251.1,443.3 L2258.1,441.0 L2265.2,438.6 L2272.2,436.4 L2279.3,434.1 L2286.3,431.9 L2293.4,429.8 L2300.4,427.7 L2307.5,425.6 L2314.5,423.5 L2321.6,421.6" fill="none" stroke="#f2f25a" stroke-width="3.2" stroke-linecap="round" stroke-linejoin="round"/>
<rect x="187.2" y="761.2" width="475.5" height="205.1" fill="#222222"/>
<path d="M187.2,829.9 H662.7" stroke="#8a8a8a" stroke-width="2"/>
<path d="M187.2,898.1 H662.7" stroke="#8a8a8a" stroke-width="2"/>
<rect x="187.2" y="761.2" width="475.5" height="205.1" fill="none" stroke="#9e9e9e" stroke-width="2"/>
<path d="M178.2,761.2 H187.2" stroke="#b0b0b0" stroke-width="2"/>
<text x="178.00" y="768.3" font-size="19.77" fill="#d6d6d6" text-anchor="end" font-weight="normal">15</text>
<path d="M178.2,829.9 H187.2" stroke="#b0b0b0" stroke-width="2"/>
<text x="178.00" y="837.0" font-size="19.77" fill="#d6d6d6" text-anchor="end" font-weight="normal">10</text>
<path d="M178.2,898.1 H187.2" stroke="#b0b0b0" stroke-width="2"/>
<text x="178.00" y="905.2" font-size="19.77" fill="#d6d6d6" text-anchor="end" font-weight="normal">5</text>
<path d="M178.2,966.3 H187.2" stroke="#b0b0b0" stroke-width="2"/>
<text x="178.00" y="973.4" font-size="19.77" fill="#d6d6d6" text-anchor="end" font-weight="normal">0</text>
<text x="355.99" y="754.0" font-size="19.48" fill="#d8d8d8" text-anchor="start" font-weight="normal" textLength="107.83" lengthAdjust="spacingAndGlyphs">DeltaE 2000</text>
<rect x="187.2" y="1008.2" width="475.5" height="205.4" fill="#222222"/>
<path d="M187.2,1077.0 H662.7" stroke="#8a8a8a" stroke-width="2"/>
<path d="M187.2,1145.3 H662.7" stroke="#8a8a8a" stroke-width="2"/>
<rect x="187.2" y="1008.2" width="475.5" height="205.4" fill="none" stroke="#9e9e9e" stroke-width="2"/>
<path d="M178.2,1008.2 H187.2" stroke="#b0b0b0" stroke-width="2"/>
<text x="178.00" y="1015.3" font-size="19.77" fill="#d6d6d6" text-anchor="end" font-weight="normal">15</text>
<path d="M178.2,1077.0 H187.2" stroke="#b0b0b0" stroke-width="2"/>
<text x="178.00" y="1084.1" font-size="19.77" fill="#d6d6d6" text-anchor="end" font-weight="normal">10</text>
<path d="M178.2,1145.3 H187.2" stroke="#b0b0b0" stroke-width="2"/>
<text x="178.00" y="1152.4" font-size="19.77" fill="#d6d6d6" text-anchor="end" font-weight="normal">5</text>
<path d="M178.2,1213.6 H187.2" stroke="#b0b0b0" stroke-width="2"/>
<text x="178.00" y="1220.7" font-size="19.77" fill="#d6d6d6" text-anchor="end" font-weight="normal">0</text>
<text x="364.02" y="1001.3" font-size="19.48" fill="#d8d8d8" text-anchor="start" font-weight="normal" textLength="91.94" lengthAdjust="spacingAndGlyphs">DeltaE ITP</text>
<rect x="727.7" y="761.2" width="475.5" height="205.1" fill="#222222"/>
<path d="M727.7,829.9 H1203.2" stroke="#8a8a8a" stroke-width="2"/>
<path d="M727.7,898.1 H1203.2" stroke="#8a8a8a" stroke-width="2"/>
<rect x="727.7" y="761.2" width="475.5" height="205.1" fill="none" stroke="#9e9e9e" stroke-width="2"/>
<path d="M718.7,761.2 H727.7" stroke="#b0b0b0" stroke-width="2"/>
<text x="718.50" y="768.3" font-size="19.77" fill="#d6d6d6" text-anchor="end" font-weight="normal">15</text>
<path d="M718.7,829.9 H727.7" stroke="#b0b0b0" stroke-width="2"/>
<text x="718.50" y="837.0" font-size="19.77" fill="#d6d6d6" text-anchor="end" font-weight="normal">10</text>
<path d="M718.7,898.1 H727.7" stroke="#b0b0b0" stroke-width="2"/>
<text x="718.50" y="905.2" font-size="19.77" fill="#d6d6d6" text-anchor="end" font-weight="normal">5</text>
<path d="M718.7,966.3 H727.7" stroke="#b0b0b0" stroke-width="2"/>
<text x="718.50" y="973.4" font-size="19.77" fill="#d6d6d6" text-anchor="end" font-weight="normal">0</text>
<text x="896.49" y="754.0" font-size="19.48" fill="#d8d8d8" text-anchor="start" font-weight="normal" textLength="107.83" lengthAdjust="spacingAndGlyphs">DeltaE 2000</text>
<rect x="727.7" y="1008.2" width="475.5" height="205.4" fill="#222222"/>
<path d="M727.7,1077.0 H1203.2" stroke="#8a8a8a" stroke-width="2"/>
<path d="M727.7,1145.3 H1203.2" stroke="#8a8a8a" stroke-width="2"/>
<rect x="727.7" y="1008.2" width="475.5" height="205.4" fill="none" stroke="#9e9e9e" stroke-width="2"/>
<path d="M718.7,1008.2 H727.7" stroke="#b0b0b0" stroke-width="2"/>
<text x="718.50" y="1015.3" font-size="19.77" fill="#d6d6d6" text-anchor="end" font-weight="normal">15</text>
<path d="M718.7,1077.0 H727.7" stroke="#b0b0b0" stroke-width="2"/>
<text x="718.50" y="1084.1" font-size="19.77" fill="#d6d6d6" text-anchor="end" font-weight="normal">10</text>
<path d="M718.7,1145.3 H727.7" stroke="#b0b0b0" stroke-width="2"/>
<text x="718.50" y="1152.4" font-size="19.77" fill="#d6d6d6" text-anchor="end" font-weight="normal">5</text>
<path d="M718.7,1213.6 H727.7" stroke="#b0b0b0" stroke-width="2"/>
<text x="718.50" y="1220.7" font-size="19.77" fill="#d6d6d6" text-anchor="end" font-weight="normal">0</text>
<text x="904.52" y="1001.3" font-size="19.48" fill="#d8d8d8" text-anchor="start" font-weight="normal" textLength="91.94" lengthAdjust="spacingAndGlyphs">DeltaE ITP</text>
<rect x="1278.2" y="761.8" width="1043.8" height="196.4" fill="#222222"/>
<path d="M1278.2,827.9 H2322.0" stroke="#8a8a8a" stroke-width="2"/>
<path d="M1278.2,894.0 H2322.0" stroke="#8a8a8a" stroke-width="2"/>
<rect x="1278.2" y="761.8" width="1043.8" height="196.4" fill="none" stroke="#9e9e9e" stroke-width="2"/>
<path d="M1278.2,761.8 H2322.0" stroke="#9e9e9e" stroke-width="3"/>
<path d="M1269.2,761.8 H1278.2" stroke="#b0b0b0" stroke-width="2"/>
<text x="1268.80" y="768.9" font-size="19.77" fill="#d6d6d6" text-anchor="end" font-weight="normal">15</text>
<path d="M1269.2,827.9 H1278.2" stroke="#b0b0b0" stroke-width="2"/>
<text x="1268.80" y="835.0" font-size="19.77" fill="#d6d6d6" text-anchor="end" font-weight="normal">10</text>
<path d="M1269.2,894.0 H1278.2" stroke="#b0b0b0" stroke-width="2"/>
<text x="1268.80" y="901.1" font-size="19.77" fill="#d6d6d6" text-anchor="end" font-weight="normal">5</text>
<path d="M1269.2,958.2 H1278.2" stroke="#b0b0b0" stroke-width="2"/>
<text x="1268.80" y="965.3" font-size="19.77" fill="#d6d6d6" text-anchor="end" font-weight="normal">0</text>
<path d="M1278.2,958.2 V966.2" stroke="#b8b8b8" stroke-width="2"/>
<path d="M1327.9,958.2 V966.2" stroke="#b8b8b8" stroke-width="2"/>
<path d="M1377.6,958.2 V966.2" stroke="#b8b8b8" stroke-width="2"/>
<path d="M1427.3,958.2 V966.2" stroke="#b8b8b8" stroke-width="2"/>
<path d="M1477.0,958.2 V966.2" stroke="#b8b8b8" stroke-width="2"/>
<path d="M1526.7,958.2 V966.2" stroke="#b8b8b8" stroke-width="2"/>
<path d="M1576.4,958.2 V966.2" stroke="#b8b8b8" stroke-width="2"/>
<path d="M1626.1,958.2 V966.2" stroke="#b8b8b8" stroke-width="2"/>
<path d="M1675.8,958.2 V966.2" stroke="#b8b8b8" stroke-width="2"/>
<path d="M1725.5,958.2 V966.2" stroke="#b8b8b8" stroke-width="2"/>
<path d="M1775.2,958.2 V966.2" stroke="#b8b8b8" stroke-width="2"/>
<path d="M1825.0,958.2 V966.2" stroke="#b8b8b8" stroke-width="2"/>
<path d="M1874.7,958.2 V966.2" stroke="#b8b8b8" stroke-width="2"/>
<path d="M1924.4,958.2 V966.2" stroke="#b8b8b8" stroke-width="2"/>
<path d="M1974.1,958.2 V966.2" stroke="#b8b8b8" stroke-width="2"/>
<path d="M2023.8,958.2 V966.2" stroke="#b8b8b8" stroke-width="2"/>
<path d="M2073.5,958.2 V966.2" stroke="#b8b8b8" stroke-width="2"/>
<path d="M2123.2,958.2 V966.2" stroke="#b8b8b8" stroke-width="2"/>
<path d="M2172.9,958.2 V966.2" stroke="#b8b8b8" stroke-width="2"/>
<path d="M2222.6,958.2 V966.2" stroke="#b8b8b8" stroke-width="2"/>
<path d="M2272.3,958.2 V966.2" stroke="#b8b8b8" stroke-width="2"/>
<path d="M2322.0,958.2 V966.2" stroke="#b8b8b8" stroke-width="2"/>
<text x="1303.05" y="981.1" font-size="19.48" fill="#d6d6d6" text-anchor="middle" font-weight="normal">0</text>
<text x="1352.76" y="981.1" font-size="19.48" fill="#d6d6d6" text-anchor="middle" font-weight="normal">5</text>
<text x="1402.46" y="981.1" font-size="19.48" fill="#d6d6d6" text-anchor="middle" font-weight="normal">10</text>
<text x="1452.17" y="981.1" font-size="19.48" fill="#d6d6d6" text-anchor="middle" font-weight="normal">15</text>
<text x="1501.87" y="981.1" font-size="19.48" fill="#d6d6d6" text-anchor="middle" font-weight="normal">20</text>
<text x="1551.58" y="981.1" font-size="19.48" fill="#d6d6d6" text-anchor="middle" font-weight="normal">25</text>
<text x="1601.28" y="981.1" font-size="19.48" fill="#d6d6d6" text-anchor="middle" font-weight="normal">30</text>
<text x="1650.99" y="981.1" font-size="19.48" fill="#d6d6d6" text-anchor="middle" font-weight="normal">35</text>
<text x="1700.69" y="981.1" font-size="19.48" fill="#d6d6d6" text-anchor="middle" font-weight="normal">40</text>
<text x="1750.40" y="981.1" font-size="19.48" fill="#d6d6d6" text-anchor="middle" font-weight="normal">45</text>
<text x="1800.10" y="981.1" font-size="19.48" fill="#d6d6d6" text-anchor="middle" font-weight="normal">50</text>
<text x="1849.80" y="981.1" font-size="19.48" fill="#d6d6d6" text-anchor="middle" font-weight="normal">55</text>
<text x="1899.51" y="981.1" font-size="19.48" fill="#d6d6d6" text-anchor="middle" font-weight="normal">60</text>
<text x="1949.21" y="981.1" font-size="19.48" fill="#d6d6d6" text-anchor="middle" font-weight="normal">65</text>
<text x="1998.92" y="981.1" font-size="19.48" fill="#d6d6d6" text-anchor="middle" font-weight="normal">70</text>
<text x="2048.62" y="981.1" font-size="19.48" fill="#d6d6d6" text-anchor="middle" font-weight="normal">75</text>
<text x="2098.33" y="981.1" font-size="19.48" fill="#d6d6d6" text-anchor="middle" font-weight="normal">80</text>
<text x="2148.03" y="981.1" font-size="19.48" fill="#d6d6d6" text-anchor="middle" font-weight="normal">85</text>
<text x="2197.74" y="981.1" font-size="19.48" fill="#d6d6d6" text-anchor="middle" font-weight="normal">90</text>
<text x="2247.44" y="981.1" font-size="19.48" fill="#d6d6d6" text-anchor="middle" font-weight="normal">95</text>
<text x="2297.15" y="981.1" font-size="19.48" fill="#d6d6d6" text-anchor="middle" font-weight="normal">100</text>
<text x="1731.21" y="754.0" font-size="19.48" fill="#d8d8d8" text-anchor="start" font-weight="normal" textLength="106.12" lengthAdjust="spacingAndGlyphs">DeltaE 2000</text>
<rect x="1278.2" y="1019.0" width="1043.8" height="177.4" fill="#222222"/>
<path d="M1278.2,1077.1 H2322.0" stroke="#8a8a8a" stroke-width="2"/>
<path d="M1278.2,1138.8 H2322.0" stroke="#8a8a8a" stroke-width="2"/>
<rect x="1278.2" y="1019.0" width="1043.8" height="177.4" fill="none" stroke="#9e9e9e" stroke-width="2"/>
<path d="M1278.2,1019.0 H2322.0" stroke="#9e9e9e" stroke-width="3"/>
<path d="M1269.2,1019.0 H1278.2" stroke="#b0b0b0" stroke-width="2"/>
<text x="1268.80" y="1026.1" font-size="19.77" fill="#d6d6d6" text-anchor="end" font-weight="normal">15</text>
<path d="M1269.2,1077.1 H1278.2" stroke="#b0b0b0" stroke-width="2"/>
<text x="1268.80" y="1084.2" font-size="19.77" fill="#d6d6d6" text-anchor="end" font-weight="normal">10</text>
<path d="M1269.2,1138.8 H1278.2" stroke="#b0b0b0" stroke-width="2"/>
<text x="1268.80" y="1145.9" font-size="19.77" fill="#d6d6d6" text-anchor="end" font-weight="normal">5</text>
<path d="M1269.2,1196.4 H1278.2" stroke="#b0b0b0" stroke-width="2"/>
<text x="1268.80" y="1203.5" font-size="19.77" fill="#d6d6d6" text-anchor="end" font-weight="normal">0</text>
<path d="M1278.2,1196.4 V1204.4" stroke="#b8b8b8" stroke-width="2"/>
<path d="M1327.9,1196.4 V1204.4" stroke="#b8b8b8" stroke-width="2"/>
<path d="M1377.6,1196.4 V1204.4" stroke="#b8b8b8" stroke-width="2"/>
<path d="M1427.3,1196.4 V1204.4" stroke="#b8b8b8" stroke-width="2"/>
<path d="M1477.0,1196.4 V1204.4" stroke="#b8b8b8" stroke-width="2"/>
<path d="M1526.7,1196.4 V1204.4" stroke="#b8b8b8" stroke-width="2"/>
<path d="M1576.4,1196.4 V1204.4" stroke="#b8b8b8" stroke-width="2"/>
<path d="M1626.1,1196.4 V1204.4" stroke="#b8b8b8" stroke-width="2"/>
<path d="M1675.8,1196.4 V1204.4" stroke="#b8b8b8" stroke-width="2"/>
<path d="M1725.5,1196.4 V1204.4" stroke="#b8b8b8" stroke-width="2"/>
<path d="M1775.2,1196.4 V1204.4" stroke="#b8b8b8" stroke-width="2"/>
<path d="M1825.0,1196.4 V1204.4" stroke="#b8b8b8" stroke-width="2"/>
<path d="M1874.7,1196.4 V1204.4" stroke="#b8b8b8" stroke-width="2"/>
<path d="M1924.4,1196.4 V1204.4" stroke="#b8b8b8" stroke-width="2"/>
<path d="M1974.1,1196.4 V1204.4" stroke="#b8b8b8" stroke-width="2"/>
<path d="M2023.8,1196.4 V1204.4" stroke="#b8b8b8" stroke-width="2"/>
<path d="M2073.5,1196.4 V1204.4" stroke="#b8b8b8" stroke-width="2"/>
<path d="M2123.2,1196.4 V1204.4" stroke="#b8b8b8" stroke-width="2"/>
<path d="M2172.9,1196.4 V1204.4" stroke="#b8b8b8" stroke-width="2"/>
<path d="M2222.6,1196.4 V1204.4" stroke="#b8b8b8" stroke-width="2"/>
<path d="M2272.3,1196.4 V1204.4" stroke="#b8b8b8" stroke-width="2"/>
<path d="M2322.0,1196.4 V1204.4" stroke="#b8b8b8" stroke-width="2"/>
<text x="1303.05" y="1219.3" font-size="19.48" fill="#d6d6d6" text-anchor="middle" font-weight="normal">0</text>
<text x="1352.76" y="1219.3" font-size="19.48" fill="#d6d6d6" text-anchor="middle" font-weight="normal">5</text>
<text x="1402.46" y="1219.3" font-size="19.48" fill="#d6d6d6" text-anchor="middle" font-weight="normal">10</text>
<text x="1452.17" y="1219.3" font-size="19.48" fill="#d6d6d6" text-anchor="middle" font-weight="normal">15</text>
<text x="1501.87" y="1219.3" font-size="19.48" fill="#d6d6d6" text-anchor="middle" font-weight="normal">20</text>
<text x="1551.58" y="1219.3" font-size="19.48" fill="#d6d6d6" text-anchor="middle" font-weight="normal">25</text>
<text x="1601.28" y="1219.3" font-size="19.48" fill="#d6d6d6" text-anchor="middle" font-weight="normal">30</text>
<text x="1650.99" y="1219.3" font-size="19.48" fill="#d6d6d6" text-anchor="middle" font-weight="normal">35</text>
<text x="1700.69" y="1219.3" font-size="19.48" fill="#d6d6d6" text-anchor="middle" font-weight="normal">40</text>
<text x="1750.40" y="1219.3" font-size="19.48" fill="#d6d6d6" text-anchor="middle" font-weight="normal">45</text>
<text x="1800.10" y="1219.3" font-size="19.48" fill="#d6d6d6" text-anchor="middle" font-weight="normal">50</text>
<text x="1849.80" y="1219.3" font-size="19.48" fill="#d6d6d6" text-anchor="middle" font-weight="normal">55</text>
<text x="1899.51" y="1219.3" font-size="19.48" fill="#d6d6d6" text-anchor="middle" font-weight="normal">60</text>
<text x="1949.21" y="1219.3" font-size="19.48" fill="#d6d6d6" text-anchor="middle" font-weight="normal">65</text>
<text x="1998.92" y="1219.3" font-size="19.48" fill="#d6d6d6" text-anchor="middle" font-weight="normal">70</text>
<text x="2048.62" y="1219.3" font-size="19.48" fill="#d6d6d6" text-anchor="middle" font-weight="normal">75</text>
<text x="2098.33" y="1219.3" font-size="19.48" fill="#d6d6d6" text-anchor="middle" font-weight="normal">80</text>
<text x="2148.03" y="1219.3" font-size="19.48" fill="#d6d6d6" text-anchor="middle" font-weight="normal">85</text>
<text x="2197.74" y="1219.3" font-size="19.48" fill="#d6d6d6" text-anchor="middle" font-weight="normal">90</text>
<text x="2247.44" y="1219.3" font-size="19.48" fill="#d6d6d6" text-anchor="middle" font-weight="normal">95</text>
<text x="2297.15" y="1219.3" font-size="19.48" fill="#d6d6d6" text-anchor="middle" font-weight="normal">100</text>
<text x="1739.73" y="1010.6" font-size="19.48" fill="#d8d8d8" text-anchor="start" font-weight="normal" textLength="91.22" lengthAdjust="spacingAndGlyphs">DeltaE ITP</text>
<rect x="0.0" y="1228.0" width="1828.0" height="126.0" fill="#3a3a3a"/>
<rect x="0.0" y="1329.5" width="1828.0" height="24.5" fill="#5a5a5a"/>
<rect x="0.0" y="1329.5" width="1828.0" height="1.5" fill="#6a6a6a"/>
<rect x="-6.0" y="1232" width="103.7" height="97.3" rx="7" fill="url(#tilesel)"/>
<rect x="8.1" y="1242.2" width="79.6" height="47.6" rx="6" fill="#000000"/>
<text x="48.10" y="1320.3" font-size="20.79" fill="#ffffff" text-anchor="middle" font-weight="bold">0</text>
<rect x="102.4" y="1232" width="100.0" height="97.3" rx="7" fill="url(#tile)"/>
<rect x="112.6" y="1242.2" width="79.8" height="47.6" rx="6" fill="#0d0d0d"/>
<text x="152.40" y="1320.3" font-size="20.79" fill="#2e2e2e" text-anchor="middle" font-weight="bold">5</text>
<rect x="206.5" y="1232" width="100.0" height="97.3" rx="7" fill="url(#tile)"/>
<rect x="216.7" y="1242.2" width="79.8" height="47.6" rx="6" fill="#1a1a1a"/>
<text x="256.48" y="1320.3" font-size="20.79" fill="#2e2e2e" text-anchor="middle" font-weight="bold">10</text>
<rect x="310.6" y="1232" width="100.0" height="97.3" rx="7" fill="url(#tile)"/>
<rect x="320.8" y="1242.2" width="79.8" height="47.6" rx="6" fill="#262626"/>
<path d="M322.0,1289 V1249 Q322.0,1243 327.8,1243 H394.6" fill="none" stroke="#000" stroke-opacity="0.22" stroke-width="2.5"/>
<text x="360.56" y="1320.3" font-size="20.79" fill="#2e2e2e" text-anchor="middle" font-weight="bold">15</text>
<rect x="414.6" y="1232" width="100.0" height="97.3" rx="7" fill="url(#tile)"/>
<rect x="424.8" y="1242.2" width="79.8" height="47.6" rx="6" fill="#333333"/>
<path d="M426.0,1289 V1249 Q426.0,1243 431.8,1243 H498.6" fill="none" stroke="#000" stroke-opacity="0.22" stroke-width="2.5"/>
<text x="464.64" y="1320.3" font-size="20.79" fill="#2e2e2e" text-anchor="middle" font-weight="bold">20</text>
<rect x="518.7" y="1232" width="100.0" height="97.3" rx="7" fill="url(#tile)"/>
<rect x="528.9" y="1242.2" width="79.8" height="47.6" rx="6" fill="#404040"/>
<path d="M530.1,1289 V1249 Q530.1,1243 535.9,1243 H602.7" fill="none" stroke="#000" stroke-opacity="0.22" stroke-width="2.5"/>
<text x="568.72" y="1320.3" font-size="20.79" fill="#2e2e2e" text-anchor="middle" font-weight="bold">25</text>
<rect x="622.8" y="1232" width="100.0" height="97.3" rx="7" fill="url(#tile)"/>
<rect x="633.0" y="1242.2" width="79.8" height="47.6" rx="6" fill="#4c4c4c"/>
<path d="M634.2,1289 V1249 Q634.2,1243 640.0,1243 H706.8" fill="none" stroke="#000" stroke-opacity="0.22" stroke-width="2.5"/>
<text x="672.80" y="1320.3" font-size="20.79" fill="#2e2e2e" text-anchor="middle" font-weight="bold">30</text>
<rect x="726.9" y="1232" width="100.0" height="97.3" rx="7" fill="url(#tile)"/>
<rect x="737.1" y="1242.2" width="79.8" height="47.6" rx="6" fill="#595959"/>
<path d="M738.3,1289 V1249 Q738.3,1243 744.1,1243 H810.9" fill="none" stroke="#000" stroke-opacity="0.22" stroke-width="2.5"/>
<text x="776.88" y="1320.3" font-size="20.79" fill="#2e2e2e" text-anchor="middle" font-weight="bold">35</text>
<rect x="831.0" y="1232" width="100.0" height="97.3" rx="7" fill="url(#tile)"/>
<rect x="841.2" y="1242.2" width="79.8" height="47.6" rx="6" fill="#666666"/>
<path d="M842.4,1289 V1249 Q842.4,1243 848.2,1243 H915.0" fill="none" stroke="#000" stroke-opacity="0.22" stroke-width="2.5"/>
<text x="880.96" y="1320.3" font-size="20.79" fill="#2e2e2e" text-anchor="middle" font-weight="bold">40</text>
<rect x="935.0" y="1232" width="100.0" height="97.3" rx="7" fill="url(#tile)"/>
<rect x="945.2" y="1242.2" width="79.8" height="47.6" rx="6" fill="#737373"/>
<path d="M946.4,1289 V1249 Q946.4,1243 952.2,1243 H1019.0" fill="none" stroke="#000" stroke-opacity="0.22" stroke-width="2.5"/>
<text x="985.04" y="1320.3" font-size="20.79" fill="#2e2e2e" text-anchor="middle" font-weight="bold">45</text>
<rect x="1039.1" y="1232" width="100.0" height="97.3" rx="7" fill="url(#tile)"/>
<rect x="1049.3" y="1242.2" width="79.8" height="47.6" rx="6" fill="#808080"/>
<path d="M1050.5,1289 V1249 Q1050.5,1243 1056.3,1243 H1123.1" fill="none" stroke="#000" stroke-opacity="0.22" stroke-width="2.5"/>
<text x="1089.12" y="1320.3" font-size="20.79" fill="#2e2e2e" text-anchor="middle" font-weight="bold">50</text>
<rect x="1143.2" y="1232" width="100.0" height="97.3" rx="7" fill="url(#tile)"/>
<rect x="1153.4" y="1242.2" width="79.8" height="47.6" rx="6" fill="#8c8c8c"/>
<path d="M1154.6,1289 V1249 Q1154.6,1243 1160.4,1243 H1227.2" fill="none" stroke="#000" stroke-opacity="0.22" stroke-width="2.5"/>
<text x="1193.20" y="1320.3" font-size="20.79" fill="#2e2e2e" text-anchor="middle" font-weight="bold">55</text>
<rect x="1247.3" y="1232" width="100.0" height="97.3" rx="7" fill="url(#tile)"/>
<rect x="1257.5" y="1242.2" width="79.8" height="47.6" rx="6" fill="#999999"/>
<path d="M1258.7,1289 V1249 Q1258.7,1243 1264.5,1243 H1331.3" fill="none" stroke="#000" stroke-opacity="0.22" stroke-width="2.5"/>
<text x="1297.28" y="1320.3" font-size="20.79" fill="#2e2e2e" text-anchor="middle" font-weight="bold">60</text>
<rect x="1351.4" y="1232" width="100.0" height="97.3" rx="7" fill="url(#tile)"/>
<rect x="1361.6" y="1242.2" width="79.8" height="47.6" rx="6" fill="#a6a6a6"/>
<path d="M1362.8,1289 V1249 Q1362.8,1243 1368.6,1243 H1435.4" fill="none" stroke="#000" stroke-opacity="0.22" stroke-width="2.5"/>
<text x="1401.36" y="1320.3" font-size="20.79" fill="#2e2e2e" text-anchor="middle" font-weight="bold">65</text>
<rect x="1455.4" y="1232" width="100.0" height="97.3" rx="7" fill="url(#tile)"/>
<rect x="1465.6" y="1242.2" width="79.8" height="47.6" rx="6" fill="#b2b2b2"/>
<path d="M1466.8,1289 V1249 Q1466.8,1243 1472.6,1243 H1539.4" fill="none" stroke="#000" stroke-opacity="0.22" stroke-width="2.5"/>
<text x="1505.44" y="1320.3" font-size="20.79" fill="#2e2e2e" text-anchor="middle" font-weight="bold">70</text>
<rect x="1559.5" y="1232" width="100.0" height="97.3" rx="7" fill="url(#tile)"/>
<rect x="1569.7" y="1242.2" width="79.8" height="47.6" rx="6" fill="#bfbfbf"/>
<path d="M1570.9,1289 V1249 Q1570.9,1243 1576.7,1243 H1643.5" fill="none" stroke="#000" stroke-opacity="0.22" stroke-width="2.5"/>
<text x="1609.52" y="1320.3" font-size="20.79" fill="#2e2e2e" text-anchor="middle" font-weight="bold">75</text>
<rect x="1663.6" y="1232" width="100.0" height="97.3" rx="7" fill="url(#tile)"/>
<rect x="1673.8" y="1242.2" width="79.8" height="47.6" rx="6" fill="#cccccc"/>
<path d="M1675.0,1289 V1249 Q1675.0,1243 1680.8,1243 H1747.6" fill="none" stroke="#000" stroke-opacity="0.22" stroke-width="2.5"/>
<text x="1713.60" y="1320.3" font-size="20.79" fill="#2e2e2e" text-anchor="middle" font-weight="bold">80</text>
<rect x="1767.7" y="1232" width="100.0" height="97.3" rx="7" fill="url(#tile)"/>
<rect x="1777.9" y="1242.2" width="79.8" height="47.6" rx="6" fill="#d9d9d9"/>
<path d="M1779.1,1289 V1249 Q1779.1,1243 1784.9,1243 H1851.7" fill="none" stroke="#000" stroke-opacity="0.22" stroke-width="2.5"/>
<text x="1817.68" y="1320.3" font-size="20.79" fill="#2e2e2e" text-anchor="middle" font-weight="bold">85</text>
<rect x="-6" y="1331.7" width="26" height="20" rx="5" fill="url(#sbtn)"/>
<path d="M14,1335.5 L6.5,1341.7 L14,1348 Z" fill="#444"/>
<rect x="24.3" y="1332" width="1484" height="19.7" rx="9" fill="#484848"/>
<rect x="1803.8" y="1333" width="19.5" height="18.2" rx="4" fill="url(#sbtn)"/>
<path d="M1810.5,1336.5 L1817.5,1342 L1810.5,1347.5 Z" fill="#444"/>
<rect x="1826.0" y="1228.0" width="646.0" height="126.0" fill="#2a2a2a"/>
<path d="M1827.3,1268 V1238 Q1827.3,1231.7 1833.5,1231.7 H1917.6 Q1923.8,1231.7 1923.8,1238 V1268 Z" fill="url(#ctl)"/>
<circle cx="1875.4" cy="1249" r="14.5" fill="url(#ctlcirc)"/>
<path d="M1867.3,1253 L1883.5,1253 L1875.4,1245 Z" fill="#2a2a2a"/>
<path d="M1827.3,1269.5 H1923.8 V1354 H1827.3 Z" fill="url(#ctl)"/>
<rect x="1844" y="1280" width="62.9" height="61.8" rx="7" fill="#1c1c1c"/>
<rect x="1848.9" y="1284.7" width="14.0" height="13.6" fill="#7af04c"/>
<rect x="1856.0" y="1298.3" width="6.9" height="14.0" fill="#86f25e"/>
<rect x="1848.9" y="1298.3" width="7.1" height="14.0" fill="#1f2a1f"/>
<rect x="1848.9" y="1312.3" width="7.1" height="13.7" fill="#80ec62"/>
<rect x="1856.0" y="1312.3" width="6.9" height="13.7" fill="#3a7a2a"/>
<rect x="1848.9" y="1326.0" width="14.0" height="11.7" fill="#3e8a26"/>
<rect x="1862.9" y="1284.7" width="24.8" height="27.6" fill="#3030e6"/>
<rect x="1862.9" y="1312.3" width="24.8" height="25.4" fill="#0c0cb0"/>
<rect x="1887.7" y="1284.7" width="14.2" height="13.6" fill="#82f6f6"/>
<rect x="1887.7" y="1298.3" width="7.1" height="14.0" fill="#8cf8f8"/>
<rect x="1894.8" y="1298.3" width="7.1" height="14.0" fill="#1f2a2a"/>
<rect x="1894.8" y="1312.3" width="7.1" height="13.7" fill="#84e4e4"/>
<rect x="1887.7" y="1312.3" width="7.1" height="13.7" fill="#2e6a6a"/>
<rect x="1887.7" y="1326.0" width="14.2" height="11.7" fill="#3e8282"/>
<clipPath id="icclip"><rect x="1862.9" y="1284.7" width="24.8" height="53"/></clipPath>
<circle cx="1875.7" cy="1312.3" r="7.1" fill="none" stroke="#9a78f0" stroke-opacity="0.8" stroke-width="1.1" clip-path="url(#icclip)"/>
<circle cx="1875.7" cy="1312.3" r="11.5" fill="none" stroke="#9a78f0" stroke-opacity="0.8" stroke-width="1.1" clip-path="url(#icclip)"/>
<circle cx="1875.7" cy="1312.3" r="15.8" fill="none" stroke="#9a78f0" stroke-opacity="0.8" stroke-width="1.1" clip-path="url(#icclip)"/>
<circle cx="1875.7" cy="1312.3" r="20.2" fill="none" stroke="#9a78f0" stroke-opacity="0.8" stroke-width="1.1" clip-path="url(#icclip)"/>
<circle cx="1875.7" cy="1312.3" r="24.6" fill="none" stroke="#9a78f0" stroke-opacity="0.8" stroke-width="1.1" clip-path="url(#icclip)"/>
<path d="M1845,1312.3 H1906" stroke="#141414" stroke-width="1.2"/>
<rect x="1846" y="1282" width="58.9" height="57.8" rx="6" fill="none" stroke="#1c1c1c" stroke-width="3.5"/>
<rect x="1925.6" y="1231.7" width="92.2" height="60" fill="url(#ctl)"/>
<circle cx="1971.7" cy="1261.3" r="19.5" fill="url(#ctlcirc)"/>
<rect x="1963.8" y="1254.1" width="15.8" height="15.2" fill="#2a2a2a"/>
<rect x="2019.6" y="1231.7" width="87.9" height="60" fill="url(#ctl)"/>
<circle cx="2063.6" cy="1261.3" r="19.5" fill="url(#ctlcirc)"/>
<path d="M2057.9,1252.9 L2074.2,1262.6 L2057.9,1272.3 Z" fill="#2a2a2a"/>
<rect x="2109.8" y="1231.7" width="88.2" height="60" fill="url(#ctl)"/>
<circle cx="2153.9" cy="1261.3" r="19.5" fill="url(#ctlcirc)"/>
<text x="2153.5" y="1270" font-size="19" font-weight="bold" fill="#2a2a2a" text-anchor="middle" font-family="Liberation Sans">[··]</text>
<rect x="2200.0" y="1231.7" width="87.8" height="60" fill="url(#ctl)"/>
<circle cx="2243.9" cy="1261.3" r="19.5" fill="url(#ctlcirc)"/>
<path d="M2244,1261.9 C2238,1255 2231,1255.5 2231,1261.9 C2231,1268.3 2238,1268.8 2244,1261.9 C2250,1255 2257,1255.5 2257,1261.9 C2257,1268.3 2250,1268.8 2244,1261.9 Z" fill="none" stroke="#2a2a2a" stroke-width="3"/>
<rect x="2289.3" y="1231.7" width="88.3" height="60" fill="#333333"/>
<circle cx="2333.4" cy="1261.3" r="19.5" fill="#2a2a2a"/>
<path d="M2324,1256 A11,11 0 0 1 2343,1260 M2342,1267 A11,11 0 0 1 2323,1263" fill="none" stroke="#1c1c1c" stroke-width="4"/>
<rect x="2383.0" y="1234.8" width="86.0" height="54.0" fill="url(#box123)"/>
<text x="2396.81" y="1274.7" font-size="36.19" fill="#ffffff" text-anchor="start" font-weight="normal" textLength="57.16" lengthAdjust="spacingAndGlyphs">123</text>
<rect x="1925.6" y="1294.2" width="272.2" height="60.0" fill="url(#bn)"/>
<rect x="2200.0" y="1294.2" width="269.0" height="60.0" fill="url(#bn)"/>
<circle cx="1987.5" cy="1323.3" r="18.5" fill="url(#ctlcirc)"/>
<path d="M1985,1315 L1978.5,1323.3 L1985,1331.6 M1992,1315 L1985.5,1323.3 L1992,1331.6" fill="none" stroke="#2e2e2e" stroke-width="2.2"/>
<circle cx="2413" cy="1323.6" r="18.5" fill="url(#ctlcirc)"/>
<path d="M2409.5,1315.3 L2416,1323.6 L2409.5,1331.9 M2416.5,1315.3 L2423,1323.6 L2416.5,1331.9" fill="none" stroke="#2e2e2e" stroke-width="2.2"/>
<text x="2038.71" y="1339.5" font-size="44.77" fill="#2e2e2e" text-anchor="start" font-weight="bold" textLength="102.98" lengthAdjust="spacingAndGlyphs">Back</text>
<text x="2251.98" y="1339.4" font-size="45.64" fill="#2e2e2e" text-anchor="start" font-weight="bold" textLength="106.13" lengthAdjust="spacingAndGlyphs">Next</text>
<rect x="2460.0" y="58.0" width="12.0" height="1170.0" fill="url(#redge)"/>
<rect x="2469.0" y="1228.0" width="3.0" height="126.0" fill="#181818"/></svg>
</body></html>
